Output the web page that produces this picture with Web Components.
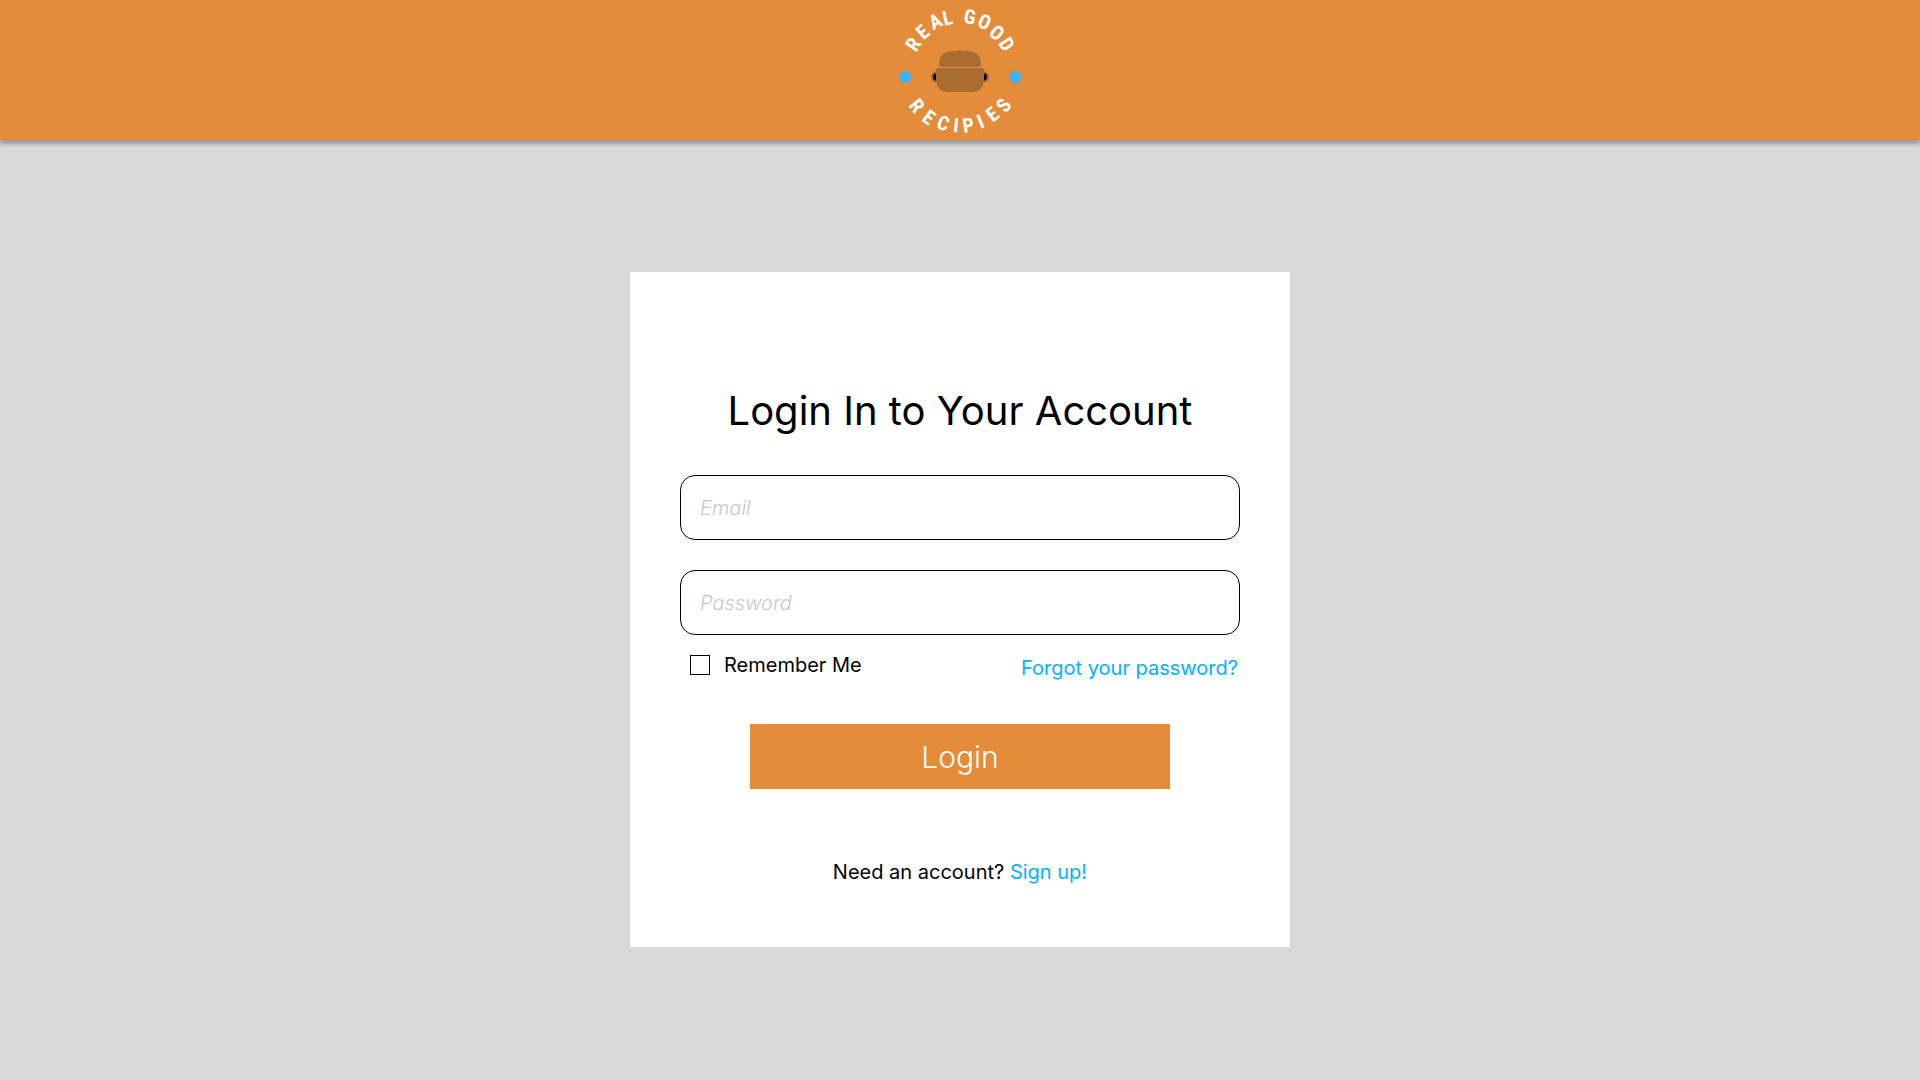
<!DOCTYPE html>
<html lang="en">
<head>
<meta charset="utf-8">
<meta name="viewport" content="width=device-width, initial-scale=1">
<title>Real Good Recipies - Login</title>
<style>
  body {
    margin: 0;
    background: #d9d9d9;
    color: #000;
    font: 400 20px/24px Inter, "Liberation Sans", sans-serif;
  }
</style>
</head>
<body>
<login-page></login-page>

<template id="login-page">
  <style>
    :host { display: flex; flex-direction: column; min-height: 100vh; }
    main { display: flex; justify-content: center; padding: 132px 16px; }
  </style>
  <site-header><brand-logo></brand-logo></site-header>
  <main>
    <login-card>
      <span slot="title">Login In to Your Account</span>
    </login-card>
  </main>
</template>

<template id="site-header">
  <style>
    :host {
      display: flex; justify-content: center; align-items: center;
      height: 140px; background: #e48c3a;
      box-shadow: 0 4px 4px rgba(0, 0, 0, .3);
    }
  </style>
  <slot></slot>
</template>

<template id="brand-logo">
  <style>
    :host { display: block; }
    svg { display: block; }
    text { font: 700 20px "Roboto Condensed", Roboto, sans-serif; fill: #fff; }
  </style>
  <svg width="140" height="140" viewBox="0 0 140 140" role="img" aria-label="Real Good Recipies">
    <circle cx="15" cy="77" r="6" fill="#3bb2fc"/>
    <circle cx="125" cy="77" r="6" fill="#3bb2fc"/>
    <g fill="#000" stroke="#a96d32" stroke-width="2">
      <ellipse cx="46" cy="77" rx="4" ry="4.5"/>
      <ellipse cx="94" cy="77" rx="4" ry="4.5"/>
    </g>
    <g fill="#a96d32">
      <circle cx="70" cy="51.5" r="2"/>
      <path d="M51 67Q49 66 49 63Q50 51 63 51H77Q90 51 91 63Q91 66 89 67Z"/>
      <path d="M47.500 68H92.500Q94 68 94 70V79Q94 92 82 92H58Q46 92 46 79V70Q46 68 47.500 68Z"/>
    </g>
    <text id="top"></text>
    <text id="bottom"></text>
  </svg>
</template>

<template id="login-card">
  <style>
    :host {
      display: block; box-sizing: border-box;
      width: 100%; max-width: 660px;
      padding: 115px 50px 63px; background: #fff;
    }
    h1 { margin: 0 0 40px; font-size: 40px; line-height: 48px; font-weight: 400; text-align: center; }
    form { display: flex; flex-direction: column; }
    .fields { display: flex; flex-direction: column; gap: 30px; }
    .options { display: flex; justify-content: space-between; min-height: 27px; padding: 18px 2px 0 10px; }
    .options a { align-self: flex-end; }
    a { color: #00b2ff; text-decoration: none; }
    button {
      align-self: center; width: 75%; height: 65px; margin-top: 44px; padding: 0;
      border: 0; background: #e48c3a; color: #fff;
      font: 300 30px/36px Inter, "Liberation Sans", sans-serif; cursor: pointer;
    }
    p { margin: 71px 0 0; text-align: center; }
  </style>
  <h1><slot name="title"></slot></h1>
  <form>
    <div class="fields">
      <text-field type="email" label="Email"></text-field>
      <text-field type="password" label="Password"></text-field>
    </div>
    <div class="options">
      <check-field>Remember Me</check-field>
      <a href="#forgot">Forgot your password?</a>
    </div>
    <button type="submit">Login</button>
  </form>
  <p>Need an account? <a href="#signup">Sign up!</a></p>
</template>

<template id="text-field">
  <style>
    :host { display: block; }
    input {
      display: block; box-sizing: border-box; width: 100%; height: 65px; margin: 0;
      padding: 0 19px; border: 1px solid #000; border-radius: 15px; background: #fff;
      color: #000; font: inherit;
    }
    input::placeholder { color: #c8c8c8; opacity: 1; font-style: italic; font-weight: 300; }
  </style>
  <input>
</template>

<template id="check-field">
  <style>
    :host { display: block; }
    label { display: flex; align-items: center; gap: 14px; }
    input {
      appearance: none; box-sizing: border-box; width: 20px; height: 20px; margin: 0;
      border: 1px solid #000; background: #fff;
    }
    input:checked { background: #e48c3a; }
  </style>
  <label><input type="checkbox"><slot></slot></label>
</template>

<script>
  class TemplateElement extends HTMLElement {
    constructor() {
      super();
      const template = document.getElementById(this.localName);
      this.attachShadow({ mode: "open" }).append(template.content.cloneNode(true));
    }
  }

  class TextField extends TemplateElement {
    connectedCallback() {
      const input = this.shadowRoot.querySelector("input");
      input.type = this.getAttribute("type");
      input.placeholder = this.getAttribute("label");
      input.setAttribute("aria-label", this.getAttribute("label"));
    }
  }

  // Each glyph of the badge: middle x, middle y, rotation in degrees.
  const BADGE = {
    top: ["REAL GOOD", [
      [22.7, 44, -57], [32.3, 31.7, -41], [45, 21, -26], [57.3, 17.3, -12], [64, 16, 0],
      [80, 16.3, 9], [94.7, 21.3, 24], [107.3, 32.3, 41], [117, 44, 57]]],
    bottom: ["RECIPIES", [
      [27.3, 105.3, 52], [39.3, 117, 37], [53.3, 122.7, 20], [66, 124.7, 5],
      [78.3, 124.7, -9], [90.3, 121, -23], [102, 113.7, -38], [113.3, 105, -53]]]
  };

  class BrandLogo extends TemplateElement {
    connectedCallback() {
      const pen = document.createElement("canvas").getContext("2d");
      for (const [id, [word, spots]] of Object.entries(BADGE)) {
        const text = this.shadowRoot.getElementById(id);
        pen.font = getComputedStyle(text).font;
        const points = spots.map(([cx, cy, degrees], i) => {
          const a = degrees * Math.PI / 180;
          const w = pen.measureText(word[i]).width / 2;
          const h = pen.measureText("E").actualBoundingBoxAscent / 2;
          return [cx - w * Math.cos(a) - h * Math.sin(a), cy - w * Math.sin(a) + h * Math.cos(a), degrees];
        });
        ["x", "y", "rotate"].forEach((name, k) =>
          text.setAttribute(name, points.map(p => p[k].toFixed(2)).join(" ")));
        text.textContent = word;
      }
    }
  }

  customElements.define("text-field", TextField);
  customElements.define("check-field", class extends TemplateElement {});
  customElements.define("brand-logo", BrandLogo);
  customElements.define("site-header", class extends TemplateElement {});
  customElements.define("login-card", class extends TemplateElement {});
  customElements.define("login-page", class extends TemplateElement {});
</script>
</body>
</html>
